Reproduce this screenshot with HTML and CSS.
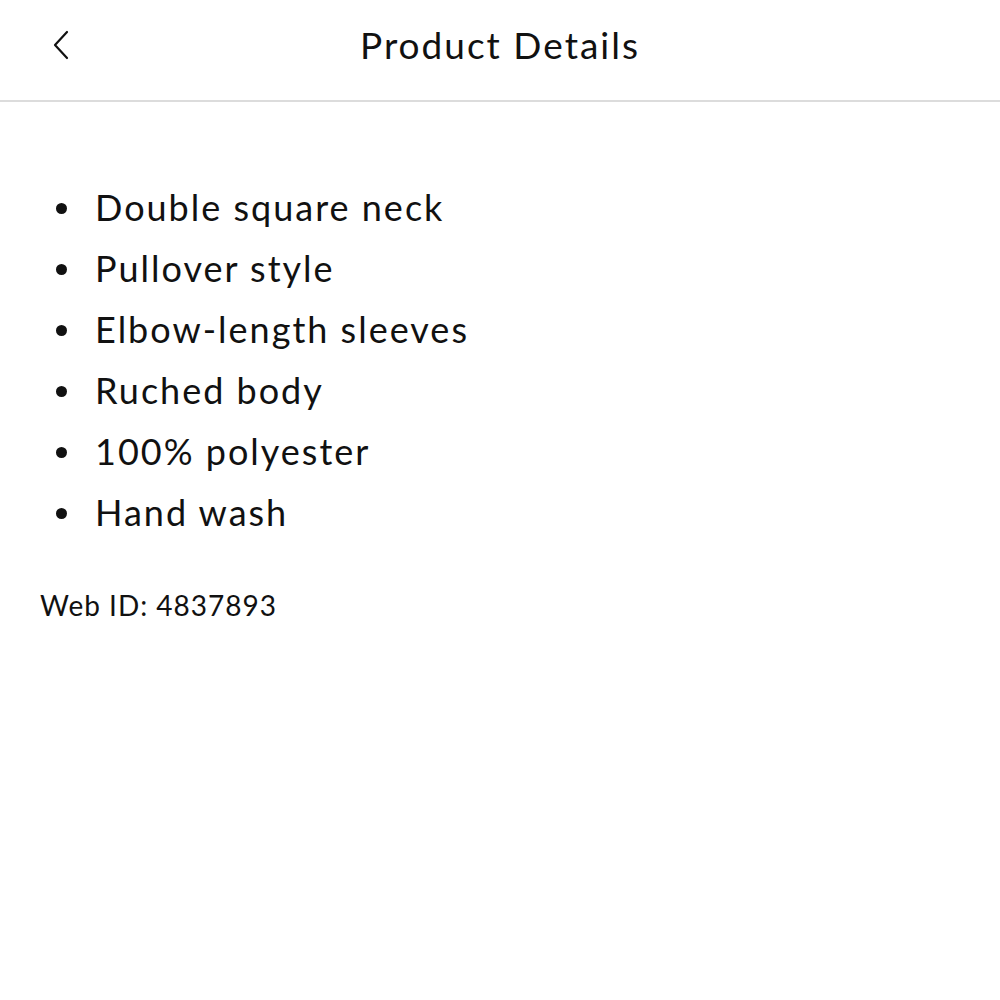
FILE: index.html
```html
<!DOCTYPE html>
<html lang="en">
<head>
  <meta charset="UTF-8">
  <meta name="viewport" content="width=device-width, initial-scale=1.0">
  <title>Product Details</title>
  <link rel="stylesheet" href="styles.css">
</head>
<body>
  <header class="top-bar">
    <button class="back-btn" aria-label="Back">
      <svg width="18" height="30" viewBox="0 0 18 30">
        <path d="M15 2 L3 15 L15 28" fill="none" stroke="#111" stroke-width="2.2" stroke-linecap="round" stroke-linejoin="round"/>
      </svg>
    </button>
    <h1 class="page-title">Product Details</h1>
  </header>

  <main class="details">
    <ul class="feature-list">
      <li>Double square neck</li>
      <li>Pullover style</li>
      <li>Elbow-length sleeves</li>
      <li>Ruched body</li>
      <li>100% polyester</li>
      <li>Hand wash</li>
    </ul>
    <p class="web-id">Web ID: 4837893</p>
  </main>
</body>
</html>
```

FILE: styles.css
```css
body {
  margin: 0;
  font-family: Lato, "Noto Sans", sans-serif;
  color: #111;
  background: #fff;
}

.top-bar {
  position: relative;
  box-sizing: border-box;
  height: 102px;
  padding-top: 23px;
  border-bottom: 2px solid #dcdcdc;
  display: flex;
  justify-content: center;
  align-items: flex-start;
}

.back-btn {
  position: absolute;
  left: 52px;
  top: 30px;
  background: none;
  border: none;
  padding: 0;
}

.page-title {
  margin: 0;
  font-size: 37px;
  line-height: 44px;
  font-weight: 400;
  letter-spacing: 2px;
}

.details {
  padding: 75px 40px 0;
}

.feature-list {
  margin: 0;
  padding: 0;
  list-style: none;
}

.feature-list li {
  display: flex;
  align-items: center;
  font-size: 36px;
  line-height: 61px;
  letter-spacing: 2px;
}

.feature-list li::before {
  content: "";
  width: 11px;
  height: 11px;
  margin: 2px 28px 0 16px;
  border-radius: 50%;
  background: #111;
  flex-shrink: 0;
}

.web-id {
  margin: 45px 0 0;
  font-size: 28px;
  line-height: 34px;
  letter-spacing: 1px;
}
```
